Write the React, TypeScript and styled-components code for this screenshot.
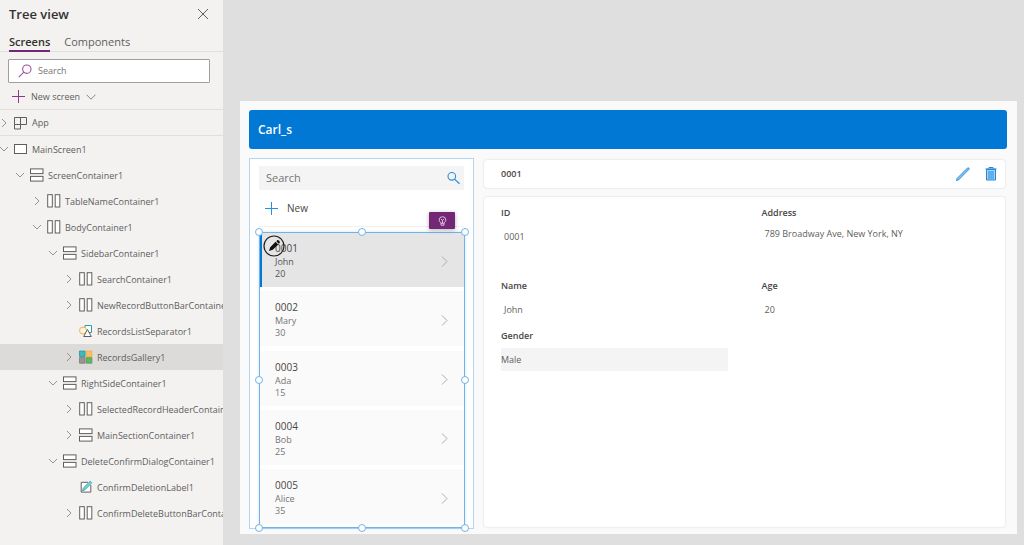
import React from 'react';
import styled, { createGlobalStyle } from 'styled-components';

const color = {
  panel: '#f3f2f1',
  stage: '#dfdfdf',
  line: '#e1dfdd',
  text: '#605e5c',
  dark: '#323130',
  purple: '#742774',
  blue: '#0078d4',
  select: '#71b3e8',
};

const GlobalStyle = createGlobalStyle`
  *, *::before, *::after { box-sizing: border-box; }
  body {
    margin: 0;
    background: ${color.stage};
    color: ${color.text};
    font-family: 'Open Sans', 'Noto Sans', sans-serif;
    font-size: 9px;
    line-height: 12px;
  }
  button, input { font: inherit; color: inherit; }
  h1, h2, h3, p, ul { margin: 0; padding: 0; }
  svg { display: block; flex: none; }
`;

const Page = styled.div`
  display: flex;
  min-height: 100vh;
`;

/* ---------- tree panel ---------- */

const Panel = styled.aside`
  flex: none;
  width: 223px;
  overflow: hidden;
  background: ${color.panel};
`;

const PanelHeader = styled.header`
  display: flex;
  align-items: center;
  justify-content: space-between;
  height: 32px;
  padding: 0 14px 4px 9px;
`;

const PanelTitle = styled.h1`
  color: ${color.dark};
  font-size: 13px;
  line-height: 20px;
  font-weight: 600;
`;

const IconButton = styled.button`
  display: flex;
  align-items: center;
  justify-content: center;
  flex: none;
  padding: 0;
  border: 0;
  background: none;
`;

const Tabs = styled.nav`
  display: flex;
  gap: 14px;
  height: 20px;
  padding: 0 9px;
  border-bottom: 1px solid ${color.line};
`;

const Tab = styled.button<{ $active?: boolean }>`
  height: 20px;
  padding: 2px 0 0;
  border: 0;
  border-bottom: 2px solid ${(p) => (p.$active ? color.purple : 'transparent')};
  background: none;
  color: ${(p) => (p.$active ? color.dark : color.text)};
  font-size: 11px;
  line-height: 16px;
  font-weight: ${(p) => (p.$active ? 600 : 400)};
`;

const TreeSearch = styled.label`
  display: flex;
  align-items: center;
  gap: 6px;
  height: 24px;
  margin: 7px 13px 0 8px;
  padding: 0 9px;
  border: 1px solid #a19f9d;
  border-radius: 1px;
  background: #fff;
`;

const BareInput = styled.input`
  flex: 1;
  min-width: 0;
  padding: 0;
  border: 0;
  outline: 0;
  background: none;
  &::placeholder { color: #767472; opacity: 1; }
`;

const NewScreen = styled.button`
  display: flex;
  align-items: center;
  gap: 6px;
  width: 100%;
  height: 27px;
  padding: 1px 12px 0;
  border: 0;
  border-bottom: 1px solid ${color.line};
  background: none;
`;

const Tree = styled.ul`
  list-style: none;
`;

const indents = [0, 16, 33, 49, 65];

const TreeItem = styled.li<{ $level: number; $active?: boolean; $ruled?: boolean }>`
  display: flex;
  align-items: center;
  gap: 6px;
  height: 26px;
  padding-left: ${(p) => indents[p.$level]}px;
  border-bottom: ${(p) => (p.$ruled ? `1px solid ${color.line}` : '0')};
  background: ${(p) => (p.$active ? '#dcdbda' : 'transparent')};
  white-space: nowrap;
`;

const TreeName = styled.span`
  margin-left: -2px;
  padding-top: 1px;
`;

/* ---------- stage and app canvas ---------- */

const Stage = styled.main`
  flex: 1;
  min-width: 0;
  padding: 101px 7px 11px 17px;
`;

const Canvas = styled.div`
  display: flex;
  flex-direction: column;
  gap: 9px;
  padding: 9px 10px 4px 9px;
  background: #fafafa;
`;

const AppBar = styled.header`
  height: 39px;
  padding: 0 9px;
  border-radius: 3px;
  background: ${color.blue};
  color: #fff;
`;

const AppTitle = styled.h2`
  font-size: 12px;
  line-height: 39px;
  font-weight: 600;
`;

const AppBody = styled.div`
  display: flex;
  gap: 10px;
  padding-bottom: 1px;
`;

const Records = styled.section`
  flex: none;
  width: 225px;
  padding: 7px 9px 0;
  border: 1px solid #b3d6f2;
  background: #fff;
`;

const RecordSearch = styled.label`
  display: flex;
  align-items: center;
  height: 24px;
  padding: 0 4px 0 7px;
  background: #f4f4f4;
  font-size: 11px;
  line-height: 14px;
`;

const Toolbar = styled.div`
  display: flex;
  align-items: center;
  height: 37px;
  padding: 0 6px;
  border-bottom: 1px solid #f0f0f0;
`;

const NewButton = styled.button`
  display: flex;
  align-items: center;
  gap: 9px;
  padding: 0;
  border: 0;
  background: none;
  color: #484644;
  font-size: 10px;
`;

const Gallery = styled.div`
  position: relative;
  display: flex;
  flex-direction: column;
  width: 206px;
  min-height: 296px;
  margin-top: 5px;
  padding-bottom: 4px;
  box-shadow: 0 0 3px rgba(0, 120, 212, 0.2);
`;

const RecordList = styled.ul`
  display: flex;
  flex: 1;
  flex-direction: column;
  justify-content: space-between;
  list-style: none;
`;

const Record = styled.li<{ $active?: boolean }>`
  display: flex;
  align-items: center;
  justify-content: space-between;
  height: 55px;
  padding: 3px 17px 0 13px;
  border-left: 3px solid ${(p) => (p.$active ? color.blue : '#fafafa')};
  background: ${(p) => (p.$active ? '#e5e5e5' : '#fafafa')};
  color: ${(p) => (p.$active ? '#55534f' : '#767472')};
`;

const RecordId = styled.p`
  padding-bottom: 2px;
  color: #484644;
  font-size: 10px;
  line-height: 12px;
`;

const RecordLine = styled.p`
  line-height: 12px;
`;

const SelectionFrame = styled.div`
  position: absolute;
  inset: 0;
  border: 1px solid ${color.select};
  pointer-events: none;
`;

const Handle = styled.span<{ $x: number; $y: number }>`
  position: absolute;
  left: ${(p) => p.$x}%;
  top: ${(p) => p.$y}%;
  width: 8px;
  height: 8px;
  margin: -4px;
  border: 1px solid ${color.select};
  border-radius: 50%;
  background: #fff;
`;

const EditBadge = styled.button`
  position: absolute;
  top: 3px;
  left: 4px;
  padding: 0;
  border: 0;
  background: none;
`;

const IdeaBadge = styled.button`
  position: absolute;
  top: -20px;
  right: 10px;
  display: flex;
  align-items: center;
  justify-content: center;
  width: 26px;
  height: 17px;
  padding: 0;
  border: 0;
  border-radius: 1px;
  background: ${color.purple};
  box-shadow: 0 1px 4px rgba(0, 0, 0, 0.3);
`;

const Details = styled.section`
  display: flex;
  flex: 1;
  flex-direction: column;
  gap: 9px;
  min-width: 0;
  padding: 2px 2px 2px 0;
`;

const Card = styled.div`
  border-radius: 3px;
  background: #fff;
  box-shadow: 0 0 2px rgba(0, 0, 0, 0.18);
`;

const DetailsHeader = styled(Card)`
  display: flex;
  align-items: center;
  gap: 12px;
  height: 28px;
  padding: 0 6px 0 17px;
`;

const DetailsTitle = styled.h3`
  flex: 1;
  color: #484644;
  font-size: 9px;
  font-weight: 600;
`;

const DetailsForm = styled(Card)`
  display: grid;
  flex: 1;
  grid-template-columns: 1fr 1fr;
  grid-template-rows: 73px 50px auto;
  align-content: start;
  padding-top: 9px;
`;

const Field = styled.div`
  min-width: 0;
  padding: 0 17px;
`;

const FieldLabel = styled.label`
  display: block;
  color: #484644;
  line-height: 14px;
  font-weight: 600;
`;

const FieldOutput = styled.output<{ $tight?: boolean }>`
  display: block;
  padding: ${(p) => (p.$tight ? 7 : 10)}px 3px 0;
  line-height: 14px;
`;

const FieldInput = styled.input`
  display: block;
  width: 100%;
  height: 23px;
  margin-top: 5px;
  padding: 0;
  border: 0;
  background: #f4f4f4;
`;

/* ---------- icons ---------- */

const Chevron = ({ open }: { open?: boolean }) => (
  <svg width="8" height="10" viewBox="0 0 8 10" fill="none" stroke="#8a8886" strokeWidth="0.9">
    <path d={open ? 'M0 3l4 4 4-4' : 'M2 1l4 4-4 4'} />
  </svg>
);

type IconKind = 'app' | 'screen' | 'rows' | 'cols' | 'shapes' | 'gallery' | 'label';

const TreeIcon = ({ kind }: { kind: IconKind }) => (
  <svg width="14" height="14" viewBox="0 0 14 14" fill="none" stroke="#605e5c" strokeWidth="1">
    {kind === 'app' && <path d="M.5 8.500V1.500h12v7H.5V13h6V1.500" />}
    {kind === 'screen' && <rect x=".5" y="2.500" width="12" height="9" fill="#fff" />}
    {kind === 'rows' && (
      <>
        <rect x=".5" y=".9" width="12.500" height="4.700" fill="#fff" />
        <rect x=".5" y="8.400" width="12.500" height="4.700" fill="#fff" />
      </>
    )}
    {kind === 'cols' && (
      <>
        <rect x=".7" y=".7" width="4.600" height="12.300" fill="#fff" />
        <rect x="8.200" y=".7" width="4.600" height="12.300" fill="#fff" />
      </>
    )}
    {kind === 'shapes' && (
      <>
        <path d="M6 1.500h6.500v7H6z" stroke="#1fa5a8" fill="#fff" />
        <circle cx="4" cy="6.500" r="3.500" stroke="#f5b04c" fill="#fff4e3" />
        <path d="M8.500 5.500l3.800 7H4.700z" fill="#fff" />
      </>
    )}
    {kind === 'gallery' && (
      <g strokeWidth=".8">
        <path d="M.5 1h5.600v5.600H.5z" fill="#3db8bb" stroke="#1f9a9d" />
        <path d="M7.300 1h5.600v5.600H7.300z" fill="#fbbd63" stroke="#f5ac42" />
        <path d="M.5 7.600h5.600v5.600H.5z" fill="#979593" stroke="#7a7876" />
        <path d="M7.300 7.600h5.600v5.600H7.300z" fill="#67b267" stroke="#4b9f4b" />
      </g>
    )}
    {kind === 'label' && (
      <>
        <path d="M9 2.300H2.200v9.800h9.600V5" fill="#fff" />
        <path d="M3.500 10.800l.8-2.800 6.900-6.800 1.600 1.600-6.800 7z" fill="#7fd0d2" stroke="#1fa5a8" strokeWidth=".8" />
      </>
    )}
  </svg>
);

const Plus = ({ stroke }: { stroke: string }) => (
  <svg width="13" height="13" viewBox="0 0 13 13" stroke={stroke} strokeWidth="1">
    <path d="M6.500 0v13M0 6.500h13" />
  </svg>
);

/* ---------- data ---------- */

type Node = { name: string; level: number; icon: IconKind; state?: 'open' | 'closed'; active?: boolean; ruled?: boolean };

const nodes: Node[] = [
  { name: 'App', level: 0, icon: 'app', state: 'closed', ruled: true },
  { name: 'MainScreen1', level: 0, icon: 'screen', state: 'open' },
  { name: 'ScreenContainer1', level: 1, icon: 'rows', state: 'open' },
  { name: 'TableNameContainer1', level: 2, icon: 'cols', state: 'closed' },
  { name: 'BodyContainer1', level: 2, icon: 'cols', state: 'open' },
  { name: 'SidebarContainer1', level: 3, icon: 'rows', state: 'open' },
  { name: 'SearchContainer1', level: 4, icon: 'cols', state: 'closed' },
  { name: 'NewRecordButtonBarContainer1', level: 4, icon: 'cols', state: 'closed' },
  { name: 'RecordsListSeparator1', level: 4, icon: 'shapes' },
  { name: 'RecordsGallery1', level: 4, icon: 'gallery', state: 'closed', active: true },
  { name: 'RightSideContainer1', level: 3, icon: 'rows', state: 'open' },
  { name: 'SelectedRecordHeaderContainer1', level: 4, icon: 'cols', state: 'closed' },
  { name: 'MainSectionContainer1', level: 4, icon: 'rows', state: 'closed' },
  { name: 'DeleteConfirmDialogContainer1', level: 3, icon: 'rows', state: 'open' },
  { name: 'ConfirmDeletionLabel1', level: 4, icon: 'label' },
  { name: 'ConfirmDeleteButtonBarContainer1', level: 4, icon: 'cols', state: 'closed' },
];

const records = [
  { id: '0001', name: 'John', age: 20 },
  { id: '0002', name: 'Mary', age: 30 },
  { id: '0003', name: 'Ada', age: 15 },
  { id: '0004', name: 'Bob', age: 25 },
  { id: '0005', name: 'Alice', age: 35 },
];

const handles = [
  [0, 0], [50, 0], [100, 0],
  [0, 50], [100, 50],
  [0, 100], [50, 100], [100, 100],
];

export default function App() {
  return (
    <>
      <GlobalStyle />
      <Page>
        <Panel>
          <PanelHeader>
            <PanelTitle>Tree view</PanelTitle>
            <IconButton aria-label="Close">
              <svg width="12" height="12" viewBox="0 0 12 12" stroke="#605e5c" strokeWidth="1">
                <path d="M1 1l10 10M11 1L1 11" />
              </svg>
            </IconButton>
          </PanelHeader>
          <Tabs>
            <Tab $active>Screens</Tab>
            <Tab>Components</Tab>
          </Tabs>
          <TreeSearch>
            <svg width="14" height="14" viewBox="0 0 14 14" fill="none" stroke="#a04fa0" strokeWidth="1.100">
              <circle cx="8.800" cy="5.200" r="4.200" />
              <path d="M5.800 8.200L.8 13.200" />
            </svg>
            <BareInput aria-label="Search the tree" placeholder="Search" />
          </TreeSearch>
          <NewScreen>
            <Plus stroke="#8a3a8a" />
            New screen
            <svg width="10" height="6" viewBox="0 0 10 6" fill="none" stroke="#797775" strokeWidth="0.900">
              <path d="M.5 .7L5 5.200 9.500 .7" />
            </svg>
          </NewScreen>
          <Tree>
            {nodes.map((n) => (
              <TreeItem key={n.name} $level={n.level} $active={n.active} $ruled={n.ruled}>
                {n.state ? <Chevron open={n.state === 'open'} /> : <svg width="8" height="10" />}
                <TreeIcon kind={n.icon} />
                <TreeName>{n.name}</TreeName>
              </TreeItem>
            ))}
          </Tree>
        </Panel>

        <Stage>
          <Canvas>
            <AppBar>
              <AppTitle>Carl_s</AppTitle>
            </AppBar>
            <AppBody>
              <Records>
                <RecordSearch>
                  <BareInput aria-label="Search records" placeholder="Search" />
                  <svg width="13" height="13" viewBox="0 0 13 13" fill="none" stroke="#2b8fdf" strokeWidth="1.100">
                    <circle cx="4.800" cy="4.300" r="3.800" />
                    <path d="M7.600 7.100l4.900 4.600" strokeWidth="1.300" />
                  </svg>
                </RecordSearch>
                <Toolbar>
                  <NewButton>
                    <Plus stroke="#2b8fdf" />
                    New
                  </NewButton>
                </Toolbar>
                <Gallery>
                  <RecordList>
                    {records.map((r, i) => (
                      <Record key={r.id} $active={i === 0}>
                        <div>
                          <RecordId>{r.id}</RecordId>
                          <RecordLine>{r.name}</RecordLine>
                          <RecordLine>{r.age}</RecordLine>
                        </div>
                        <svg width="7" height="11" viewBox="0 0 7 11" fill="none" stroke="#a6a4a2" strokeWidth="0.900">
                          <path d="M1 .5l5 5-5 5" />
                        </svg>
                      </Record>
                    ))}
                  </RecordList>
                  <SelectionFrame />
                  {handles.map(([x, y]) => (
                    <Handle key={`${x}-${y}`} $x={x} $y={y} />
                  ))}
                  <EditBadge aria-label="Edit gallery">
                    <svg width="22" height="22" viewBox="0 0 22 22">
                      <circle cx="11" cy="11" r="10" fill="none" stroke="#201f1e" strokeWidth="1.200" />
                      <path d="M6 16l1.200-3.800 5.400-5.400 2.600 2.600-5.400 5.400zM13.300 6.200l1-1c.8-.7 3.200 1.600 2.500 2.500l-1 1z" fill="#111" />
                    </svg>
                  </EditBadge>
                  <IdeaBadge aria-label="Ideas">
                    <svg width="9" height="10" viewBox="0 0 9 10" fill="none" stroke="#e6cfe6" strokeWidth="0.900">
                      <path d="M3 6.800C1.700 6 1.200 5 1.200 4a3.300 3.300 0 0 1 6.600 0c0 1-.5 2-1.800 2.800v2.400H3zM3 7.300h3M4.500 7V4.400L3 3.200M4.500 4.400L6 3.200" />
                    </svg>
                  </IdeaBadge>
                </Gallery>
              </Records>

              <Details>
                <DetailsHeader>
                  <DetailsTitle>0001</DetailsTitle>
                  <IconButton aria-label="Edit record">
                    <svg width="16" height="16" viewBox="0 0 16 16" fill="#8cc4f0" stroke="#1c87dc" strokeWidth="0.900">
                      <path d="M1.500 14.500l.7-2.200L12.600 1.900c.8-.6 2 .6 1.400 1.400L3.700 13.800z" />
                    </svg>
                  </IconButton>
                  <IconButton aria-label="Delete record">
                    <svg width="16" height="16" viewBox="0 0 16 16" fill="none" stroke="#1c87dc" strokeWidth="1">
                      <path d="M3.500 3.500h9v10.500h-9z" fill="#a9d3f5" />
                      <path d="M2.500 2.900h11M6 2.500V1.500h4v1M6 5v8M8 5v8M10 5v8" />
                    </svg>
                  </IconButton>
                </DetailsHeader>
                <DetailsForm>
                  <Field>
                    <FieldLabel htmlFor="f-id">ID</FieldLabel>
                    <FieldOutput id="f-id">0001</FieldOutput>
                  </Field>
                  <Field>
                    <FieldLabel htmlFor="f-address">Address</FieldLabel>
                    <FieldOutput id="f-address" $tight>789 Broadway Ave, New York, NY</FieldOutput>
                  </Field>
                  <Field>
                    <FieldLabel htmlFor="f-name">Name</FieldLabel>
                    <FieldOutput id="f-name">John</FieldOutput>
                  </Field>
                  <Field>
                    <FieldLabel htmlFor="f-age">Age</FieldLabel>
                    <FieldOutput id="f-age">20</FieldOutput>
                  </Field>
                  <Field>
                    <FieldLabel htmlFor="f-gender">Gender</FieldLabel>
                    <FieldInput id="f-gender" readOnly value="Male" />
                  </Field>
                </DetailsForm>
              </Details>
            </AppBody>
          </Canvas>
        </Stage>
      </Page>
    </>
  );
}
